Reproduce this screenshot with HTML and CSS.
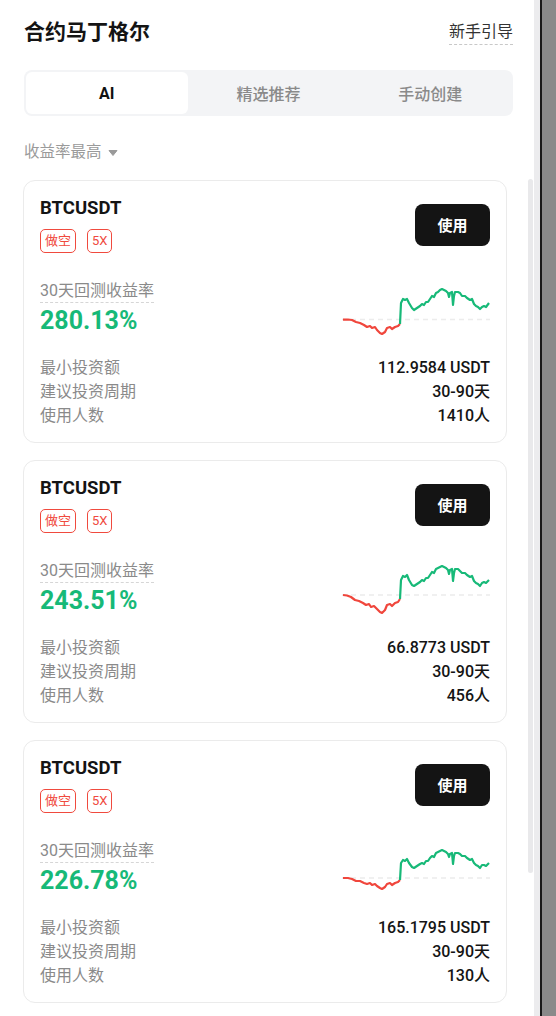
FILE: index.html
```html
<!DOCTYPE html>
<html lang="zh-CN">
<head>
    <meta charset="UTF-8">
    <meta name="viewport" content="width=device-width, initial-scale=1.0">
    <title>合约马丁格尔</title>
    <link rel="stylesheet" href="styles.css">
</head>
<body>
    <div class="app">
        <div class="header">
            <h1>合约马丁格尔</h1>
            <span class="guide">新手引导</span>
        </div>

        <div class="tabs">
            <div class="tab active">AI</div>
            <div class="tab">精选推荐</div>
            <div class="tab">手动创建</div>
        </div>

        <div class="sort">
            收益率最高
            <svg class="caret" width="10" height="8" viewBox="0 0 10 8"><path d="M1 1.5h8L5 6.5z" fill="#9a9a9a" stroke="#9a9a9a" stroke-width="1" stroke-linejoin="round"/></svg>
        </div>

        <div class="list">
            <div class="card">
                <div class="card-top">
                    <div>
                        <div class="symbol">BTCUSDT</div>
                        <div class="tags"><span class="tag">做空</span><span class="tag">5X</span></div>
                    </div>
                    <button class="use">使用</button>
                </div>
                <div class="stat">
                    <div>
                        <div class="stat-label">30天回测收益率</div>
                        <div class="stat-value">280.13%</div>
                    </div>
                    <svg class="chart" width="148" height="52" viewBox="0 0 148 52">
                        <line x1="0" y1="36.5" x2="148" y2="36.5" stroke="#ececec" stroke-width="1.5" stroke-dasharray="5 4"/>
                        <polyline fill="none" stroke="#f0463c" stroke-width="2.2" stroke-linejoin="round" points="1,36.7 6,36.5 10,37 14,39 18,40 22,42 25,44 28,43 30,45 33,44 35,47 38,50 40,51 43,49 45,45 48,44 50,46 53,44 56,43 58,41"/>
                        <polyline fill="none" stroke="#17b978" stroke-width="2.2" stroke-linejoin="round" points="58,41 59,20 61,16 63,17 65,16 67,20 70,25 72,27 75,25 78,23 80,21 82,22 84,19 86,19 88,16 90,13 92,14 94,10 96,9 98,7 100,6 102,7 104,8 106,10 107,14 108,10 110,9 111,22 112,13 113,9 116,9 118,10 120,13 123,13 125,15 128,17 130,16 132,21 134,23 136,24 138,26 140,24 142,23 144,24 147,20"/>
                    </svg>
                </div>
                <div class="rows">
                    <div class="row"><span>最小投资额</span><b>112.9584 USDT</b></div>
                    <div class="row"><span>建议投资周期</span><b>30-90天</b></div>
                    <div class="row"><span>使用人数</span><b>1410人</b></div>
                </div>
            </div>

            <div class="card">
                <div class="card-top">
                    <div>
                        <div class="symbol">BTCUSDT</div>
                        <div class="tags"><span class="tag">做空</span><span class="tag">5X</span></div>
                    </div>
                    <button class="use">使用</button>
                </div>
                <div class="stat">
                    <div>
                        <div class="stat-label">30天回测收益率</div>
                        <div class="stat-value">243.51%</div>
                    </div>
                    <svg class="chart" width="148" height="52" viewBox="0 0 148 52">
                        <line x1="0" y1="32" x2="148" y2="32" stroke="#ececec" stroke-width="1.5" stroke-dasharray="5 4"/>
                        <polyline fill="none" stroke="#f0463c" stroke-width="2.2" stroke-linejoin="round" points="1,32 5,32.5 9,34 13,37 17,38 21,40 24,42 27,41 29,44 32,43 35,46 38,49 40,50 43,47 45,42 48,41 50,43 53,40 56,39 58,36"/>
                        <polyline fill="none" stroke="#17b978" stroke-width="2.2" stroke-linejoin="round" points="58,36 59,17 61,13 63,14 65,12 67,17 70,22 72,23 75,21 78,19 80,17 82,18 84,15 86,15 88,12 90,9 92,10 94,6 96,5 98,4 100,3 102,4 104,5 106,7 107,11 108,7 110,6 111,18 112,10 113,6 116,6 118,8 120,10 123,10 125,12 128,14 130,13 132,18 134,20 136,21 138,23 140,20 142,19 144,20 147,17"/>
                    </svg>
                </div>
                <div class="rows">
                    <div class="row"><span>最小投资额</span><b>66.8773 USDT</b></div>
                    <div class="row"><span>建议投资周期</span><b>30-90天</b></div>
                    <div class="row"><span>使用人数</span><b>456人</b></div>
                </div>
            </div>

            <div class="card">
                <div class="card-top">
                    <div>
                        <div class="symbol">BTCUSDT</div>
                        <div class="tags"><span class="tag">做空</span><span class="tag">5X</span></div>
                    </div>
                    <button class="use">使用</button>
                </div>
                <div class="stat">
                    <div>
                        <div class="stat-label">30天回测收益率</div>
                        <div class="stat-value">226.78%</div>
                    </div>
                    <svg class="chart" width="148" height="52" viewBox="0 0 148 52">
                        <line x1="0" y1="35" x2="148" y2="35" stroke="#ececec" stroke-width="1.5" stroke-dasharray="5 4"/>
                        <polyline fill="none" stroke="#f0463c" stroke-width="2.2" stroke-linejoin="round" points="1,35 6,35 10,36 14,38 18,38 22,40 25,41 28,40 30,42 33,41 35,43 38,45 40,46 43,44 45,41 48,40 50,42 53,40 56,39 58,37"/>
                        <polyline fill="none" stroke="#17b978" stroke-width="2.2" stroke-linejoin="round" points="58,37 59,20 61,17 63,18 65,16 67,20 70,24 72,25 75,23 78,21 80,20 82,21 84,18 86,18 88,15 90,13 92,14 94,10 96,9 98,8 100,7 102,8 104,9 106,11 107,14 108,11 110,10 111,21 112,13 113,10 116,10 118,11 120,13 123,13 125,15 128,17 130,16 132,20 134,22 136,23 138,25 140,22 142,22 144,23 147,20"/>
                    </svg>
                </div>
                <div class="rows">
                    <div class="row"><span>最小投资额</span><b>165.1795 USDT</b></div>
                    <div class="row"><span>建议投资周期</span><b>30-90天</b></div>
                    <div class="row"><span>使用人数</span><b>130人</b></div>
                </div>
            </div>
        </div>

        <div class="thumb"></div>
    </div>
    <div class="track"></div>
    <div class="bezel"></div>
    <div class="outside"></div>
</body>
</html>
```

FILE: styles.css
```css
html {
    overflow: hidden;
    background-color: #8a8a8a;
}
body {
    margin: 0;
    display: flex;
    height: 1016px;
    overflow: hidden;
    font-family: Roboto, "Noto Sans CJK SC", sans-serif;
    color: #141414;
}
.app {
    position: relative;
    flex: 0 0 534px;
    box-sizing: border-box;
    padding: 0 21px 0 24px;
    overflow: hidden;
    background-color: #fff;
}
.track {
    flex: 0 0 6px;
    background-color: #ececee;
}
.bezel {
    flex: 0 0 2px;
    background-color: #1a1a1a;
}
.outside {
    flex: 1 0 14px;
    background-color: #8a8a8a;
}
.thumb {
    position: absolute;
    top: 179px;
    right: 1px;
    width: 5px;
    height: 694px;
    border-radius: 3px;
    background-color: #e9e9eb;
}
.header {
    display: flex;
    justify-content: space-between;
    align-items: center;
    height: 64px;
}
h1 {
    margin: 0;
    font-size: 21px;
    font-weight: 700;
    line-height: 28px;
}
.guide {
    font-size: 16px;
    color: #333;
    line-height: 22px;
    padding-bottom: 1px;
    border-bottom: 1px dashed #c8c8c8;
    margin-top: 2px;
}
.tabs {
    display: flex;
    margin-top: 6px;
    padding: 2px;
    height: 42px;
    border-radius: 8px;
    background-color: #f3f4f6;
}
.tab {
    flex: 1;
    display: flex;
    justify-content: center;
    align-items: center;
    font-size: 16px;
    font-weight: 500;
    color: #8a8a8a;
    border-radius: 6px;
}
.tab.active {
    background-color: #fff;
    color: #111;
    font-weight: 700;
}
.sort {
    display: flex;
    align-items: center;
    gap: 6px;
    margin-top: 25px;
    font-size: 15.5px;
    line-height: 22px;
    color: #9a9a9a;
}
.caret {
    margin-top: 1px;
}
.list {
    display: flex;
    flex-direction: column;
    gap: 17px;
    margin: 17px 6px 0 -1px;
}
.card {
    border: 1px solid #ebebeb;
    border-radius: 12px;
    padding: 15px 16px 14px;
}
.card-top {
    display: flex;
    justify-content: space-between;
    align-items: center;
}
.symbol {
    font-size: 18.5px;
    font-weight: 700;
    line-height: 24px;
}
.tags {
    display: flex;
    gap: 11px;
    margin-top: 9px;
}
.tag {
    height: 22px;
    line-height: 22px;
    padding: 0 4px;
    border: 1px solid #f04a3e;
    border-radius: 5px;
    color: #f04a3e;
    font-size: 13px;
}
.use {
    width: 75px;
    height: 42px;
    border: none;
    border-radius: 8px;
    background-color: #141414;
    color: #fff;
    font-family: inherit;
    font-size: 15px;
    font-weight: 700;
}
.stat {
    display: flex;
    justify-content: space-between;
    align-items: flex-end;
    margin-top: 27px;
}
.stat-label {
    display: inline-block;
    font-size: 16px;
    line-height: 22px;
    color: #8a8a8a;
    border-bottom: 1px dashed #d6d6d6;
}
.stat-value {
    margin-top: 3px;
    font-size: 25px;
    line-height: 30px;
    font-weight: 700;
    color: #17b978;
}
.chart {
    display: block;
    margin-bottom: 1px;
}
.rows {
    margin-top: 20px;
}
.row {
    display: flex;
    justify-content: space-between;
    font-size: 16px;
    line-height: 24px;
}
.row span {
    color: #8a8a8a;
}
.row b {
    font-weight: 500;
    color: #141414;
}
```
